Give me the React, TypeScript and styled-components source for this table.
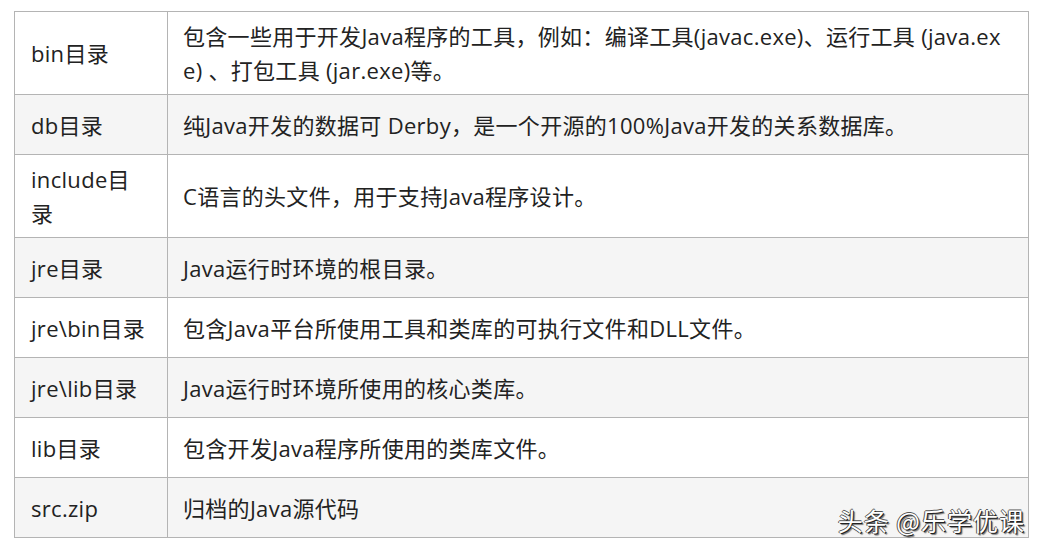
import styled, { createGlobalStyle } from 'styled-components';

const rows: { name: string[]; desc: string[] }[] = [
  {
    name: ['bin目录'],
    desc: [
      '包含一些用于开发Java程序的工具，例如：编译工具(javac.exe)、运行工具 (java.ex',
      'e) 、打包工具 (jar.exe)等。',
    ],
  },
  { name: ['db目录'], desc: ['纯Java开发的数据可 Derby，是一个开源的100%Java开发的关系数据库。'] },
  { name: ['include目', '录'], desc: ['C语言的头文件，用于支持Java程序设计。'] },
  { name: ['jre目录'], desc: ['Java运行时环境的根目录。'] },
  { name: ['jre\\bin目录'], desc: ['包含Java平台所使用工具和类库的可执行文件和DLL文件。'] },
  { name: ['jre\\lib目录'], desc: ['Java运行时环境所使用的核心类库。'] },
  { name: ['lib目录'], desc: ['包含开发Java程序所使用的类库文件。'] },
  { name: ['src.zip'], desc: ['归档的Java源代码'] },
];

const GlobalStyle = createGlobalStyle`
  html, body {
    margin: 0;
    padding: 0;
    background: #ffffff;
  }
  body {
    font-family: "Open Sans", "Noto Sans CJK SC", sans-serif;
    color: #222222;
  }
`;

export default function App() {
  return (
    <Page>
      <GlobalStyle />
      <Table>
        <colgroup>
          <col style={{ width: 153 }} />
          <col />
        </colgroup>
        <tbody>
          {rows.map((row, i) => (
            <Row key={i} $shaded={i % 2 === 1}>
              <NameCell>
                {row.name.map((line, j) => (
                  <Line key={j}>{line}</Line>
                ))}
              </NameCell>
              <DescCell>
                {row.desc.map((line, j) => (
                  <Line key={j}>{line}</Line>
                ))}
              </DescCell>
            </Row>
          ))}
        </tbody>
      </Table>
      <Watermark>头条 @乐学优课</Watermark>
    </Page>
  );
}

const Page = styled.div`
  position: relative;
  width: 1040px;
  height: 550px;
  padding: 11px 0 0 14px;
  box-sizing: border-box;
`;

const Table = styled.table`
  width: 1015px;
  border-collapse: collapse;
  table-layout: fixed;
  font-size: 22px;
  letter-spacing: 0.3px;
`;

const Row = styled.tr<{ $shaded: boolean }>`
  height: 60px;
  background: ${({ $shaded }) => ($shaded ? '#f5f5f5' : '#ffffff')};
`;

const Cell = styled.td`
  border: 1px solid #b4b4b4;
  padding: 7px 15px 7px 15px;
  vertical-align: middle;
  line-height: 34px;
  white-space: nowrap;
`;

const NameCell = styled(Cell)`
  padding-left: 16px;
`;

const DescCell = styled(Cell)`
  padding-left: 15px;
`;

const Line = styled.div``;

const Watermark = styled.div`
  position: absolute;
  right: 15px;
  bottom: 12px;
  font-family: "Noto Sans CJK SC", sans-serif;
  font-size: 25px;
  color: #ffffff;
  letter-spacing: 1px;
  text-shadow: 1px 1px 0 #222, -1px 0 0 #555, 0 -1px 0 #555, 2px 2px 1px rgba(0, 0, 0, 0.5);
`;
